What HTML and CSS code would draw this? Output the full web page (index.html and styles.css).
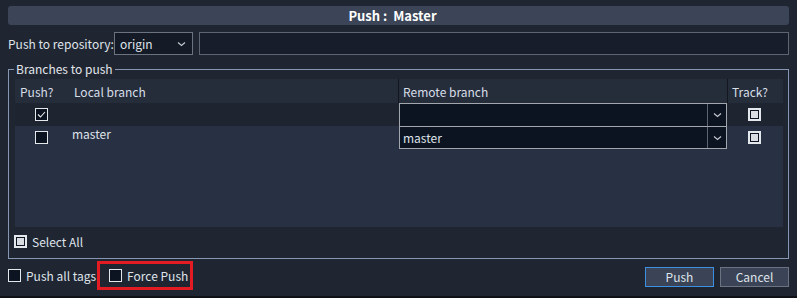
FILE: index.html
```html
<!DOCTYPE html>
<html lang="en">
<head>
  <meta charset="UTF-8">
  <title>Push : Master</title>
  <link rel="stylesheet" href="styles.css">
</head>
<body>
  <div class="dialog">
    <div class="title-bar">Push :&nbsp; Master</div>

    <div class="repo-row">
      <span class="repo-label">Push to repository:</span>
      <div class="combo repo-combo">
        <span class="combo-text">origin</span>
        <span class="combo-arrow">
          <svg width="9" height="6" viewBox="0 0 9 6"><polyline points="1,1.5 4.5,4.5 8,1.5" fill="none" stroke="#c3c8d0" stroke-width="1.2"/></svg>
        </span>
      </div>
      <div class="repo-input"></div>
    </div>

    <fieldset class="group">
      <legend>Branches to push</legend>
      <div class="branch-table">
        <div class="cell head">Push?</div>
        <div class="cell head local">Local branch</div>
        <div class="cell head sep">Remote branch</div>
        <div class="cell head sep">Track?</div>

        <div class="cell odd center">
          <span class="check checked">
            <svg width="11" height="11" viewBox="0 0 11 11"><polyline points="2,5.5 4.5,8 9,3" fill="none" stroke="#e8eaee" stroke-width="1.1"/></svg>
          </span>
        </div>
        <div class="cell odd"></div>
        <div class="cell odd remote">
          <div class="combo row-combo">
            <span class="combo-text"></span>
            <span class="combo-arrow split">
              <svg width="9" height="6" viewBox="0 0 9 6"><polyline points="1,1.5 4.5,4.5 8,1.5" fill="none" stroke="#c3c8d0" stroke-width="1.2"/></svg>
            </span>
          </div>
        </div>
        <div class="cell odd center track"><span class="check partial"></span></div>

        <div class="cell even center"><span class="check"></span></div>
        <div class="cell even local-name">master</div>
        <div class="cell even remote">
          <div class="combo row-combo">
            <span class="combo-text">master</span>
            <span class="combo-arrow split">
              <svg width="9" height="6" viewBox="0 0 9 6"><polyline points="1,1.5 4.5,4.5 8,1.5" fill="none" stroke="#c3c8d0" stroke-width="1.2"/></svg>
            </span>
          </div>
        </div>
        <div class="cell even center track"><span class="check partial"></span></div>

        <div class="table-empty"></div>
      </div>

      <label class="check-label select-all">
        <span class="check partial"></span>
        <span>Select All</span>
      </label>
    </fieldset>

    <div class="bottom-row">
      <label class="check-label">
        <span class="check"></span>
        <span>Push all tags</span>
      </label>
      <div class="highlight">
        <label class="check-label">
          <span class="check"></span>
          <span>Force Push</span>
        </label>
      </div>
      <div class="buttons">
        <button class="btn primary">Push</button>
        <button class="btn">Cancel</button>
      </div>
    </div>
  </div>
</body>
</html>
```

FILE: styles.css
```css
/* Push dialog, dark theme */
html {
  background-color: #0e1116;
}

body {
  margin: 0;
  font-family: "Noto Sans CJK KR", "Noto Sans", sans-serif;
  font-size: 12px;
  color: #dfe3ea;
}

.dialog {
  height: 296px;
  box-sizing: border-box;
  padding: 6px 8px 0;
  background-color: #1f2531;
}

.title-bar {
  height: 19px;
  line-height: 19px;
  text-align: center;
  font-weight: bold;
  font-size: 13px;
  color: #ffffff;
  background-color: #3b4557;
  border-radius: 3px;
  padding-right: 12px;
}

/* repository row */
.repo-row {
  display: flex;
  align-items: center;
  height: 23px;
  margin-top: 7px;
}

.repo-label {
  width: 106px;
  flex-shrink: 0;
  white-space: nowrap;
}

.combo {
  display: flex;
  align-items: center;
  box-sizing: border-box;
  background-color: #0d1421;
}

.combo-text {
  flex: 1;
  padding-left: 5px;
  white-space: nowrap;
}

.combo-arrow {
  display: flex;
  align-items: center;
  justify-content: center;
  width: 18px;
  height: 100%;
}

.combo-arrow.split {
  border-left: 1px solid #5f6570;
}

.repo-combo {
  width: 79px;
  height: 23px;
  flex-shrink: 0;
  border: 1px solid #6c7380;
  background-color: #141a26;
  padding-right: 2px;
}

.repo-input {
  flex: 1;
  height: 23px;
  box-sizing: border-box;
  margin-left: 6px;
  border: 1px solid #5d6472;
  background-color: #171d2a;
}

/* group box */
.group {
  margin: 6px 0 0;
  padding: 2px 5px 0 6px;
  border: 1px solid #8797b3;
  min-width: 0;
}

.group legend {
  padding: 0 2px;
  margin-left: -1px;
  line-height: 16px;
  color: #e2e6ec;
}

.branch-table {
  display: grid;
  grid-template-columns: 52px 331px 329px 56px;
  grid-template-rows: 24px 23px 23px 78px;
}

.cell {
  display: flex;
  align-items: center;
  white-space: nowrap;
}

.head {
  background-color: #252d3b;
  padding-left: 5px;
  color: #d8dee8;
}

.head.local {
  padding-left: 7px;
}

.head.sep {
  border-left: 1px solid #12161d;
  padding-left: 4px;
}

.odd {
  background-color: #1f2530;
}

.even {
  background-color: #283043;
}

.center {
  justify-content: center;
}

.track {
  padding-right: 2px;
}

.local-name {
  align-items: flex-start;
  padding: 0 0 0 5px;
  line-height: 16px;
}

.remote {
  padding-left: 1px;
}

.row-combo {
  width: 328px;
  height: 23px;
  border: 1px solid #a2a7ae;
}

.odd .row-combo {
  border-bottom: none;
}

.row-combo .combo-text {
  padding-left: 3px;
}

.table-empty {
  grid-column: 1 / -1;
  background-color: #283043;
}

/* checkboxes */
.check {
  display: inline-flex;
  align-items: center;
  justify-content: center;
  width: 13px;
  height: 13px;
  box-sizing: border-box;
  border: 1px solid #e4e7ec;
  background-color: #0d1421;
}

.check.partial {
  border-width: 2px;
  padding: 1px;
}

.check.partial::after {
  content: "";
  width: 7px;
  height: 7px;
  background-color: #d9dce1;
}

.check-label {
  display: flex;
  align-items: center;
  gap: 5px;
  white-space: nowrap;
}

.select-all {
  margin-top: 8px;
  height: 13px;
  padding-bottom: 10px;
  margin-left: -1px;
}

/* bottom row */
.bottom-row {
  display: flex;
  align-items: center;
  height: 29px;
  margin-top: 2px;
}

.highlight {
  margin-left: 1px;
  padding: 0 5px 0 9px;
  height: 29px;
  box-sizing: border-box;
  width: 96px;
  display: flex;
  align-items: center;
  border: 3px solid #e31c23;
}

.buttons {
  margin-left: auto;
  display: flex;
  gap: 6px;
  margin-top: 3px;
}

.btn {
  width: 69px;
  height: 20px;
  padding: 0;
  font-family: inherit;
  font-size: 12px;
  line-height: 16px;
  color: #dfe3ea;
  background-color: #3a4456;
  border: 1px solid #6b7282;
}

.btn.primary {
  border-color: #3d8fe2;
}
```
